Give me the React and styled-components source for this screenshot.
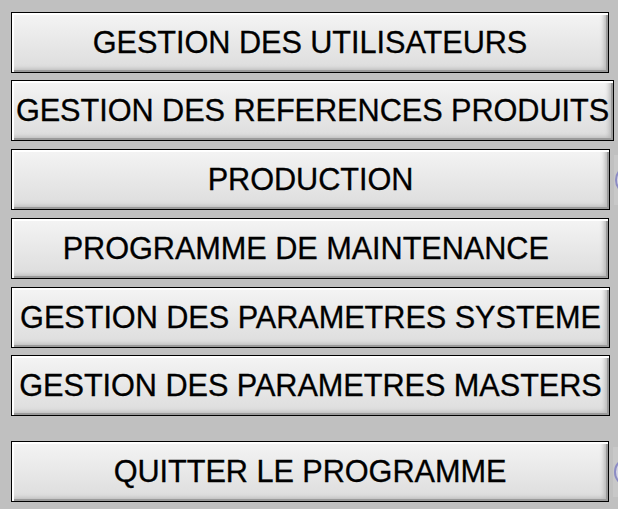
import styled, { createGlobalStyle } from "styled-components";

const GlobalStyle = createGlobalStyle`
  html, body {
    margin: 0;
    padding: 0;
    background: #c0c0c0;
    overflow: hidden;
  }
`;

export default function App() {
  const items = [
    { label: "GESTION DES UTILISATEURS", w: 598, gap: 12 },
    { label: "GESTION DES REFERENCES PRODUITS", w: 603, gap: 7 },
    { label: "PRODUCTION", w: 599, gap: 8, led: true },
    { label: "PROGRAMME DE MAINTENANCE ", w: 598, gap: 8 },
    { label: "GESTION DES PARAMETRES SYSTEME", w: 599, gap: 8 },
    { label: "GESTION DES PARAMETRES MASTERS", w: 599, gap: 7 },
    { label: "QUITTER LE PROGRAMME", w: 598, gap: 25, led: true },
  ];
  return (
    <Panel>
      <GlobalStyle />
      {items.map((it) => (
        <Row key={it.label} $gap={it.gap}>
          <Button $w={it.w}>{it.label}</Button>
          {it.led && (
            <LedBox>
              <Led />
            </LedBox>
          )}
        </Row>
      ))}
    </Panel>
  );
}

const Panel = styled.div`
  width: 618px;
  height: 509px;
  padding-left: 11px;
  box-sizing: border-box;
  display: flex;
  flex-direction: column;
  overflow: hidden;
`;

const Row = styled.div`
  display: flex;
  align-items: center;
  gap: 4px;
  margin-top: ${(p) => p.$gap}px;
  height: 61px;
`;

const Button = styled.div`
  flex: none;
  width: ${(p) => p.$w}px;
  height: 61px;
  box-sizing: border-box;
  padding-top: 2px;
  border: 1px solid #000;
  background: linear-gradient(to bottom, #f4f4f4 0%, #e8e8e8 50%, #dcdcdc 100%);
  box-shadow:
    inset 2px 2px 0 #ffffff,
    inset -2px -2px 0 #9a9a9a,
    inset -5px -4px 4px -1px #b8b8b8;
  display: flex;
  align-items: center;
  justify-content: center;
  white-space: pre;
  font-family: "Liberation Sans", Arial, sans-serif;
  font-size: 30.7px;
  letter-spacing: -0.06px;
  -webkit-text-stroke: 0.3px #000;
  color: #000;
  line-height: 1;
  cursor: pointer;
`;

const LedBox = styled.div`
  flex: none;
  width: 26px;
  height: 50px;
  background: #c8c8c8;
  display: flex;
  align-items: center;
  padding-left: 1px;
`;

const Led = styled.div`
  width: 18px;
  height: 22px;
  border-radius: 50%;
  border: 2px solid #8c8cc4;
  background: #d4d4e4;
`;
